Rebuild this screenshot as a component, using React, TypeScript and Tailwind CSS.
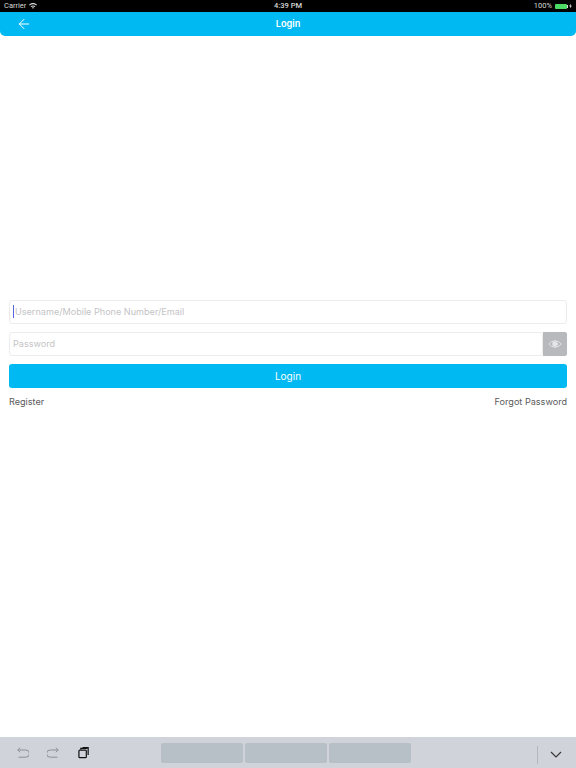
import { ArrowLeft } from 'lucide-react';

const font = "font-['Inter','Liberation_Sans',sans-serif]";

function StatusBar() {
  return (
    <div className="grid grid-cols-3 items-center h-3 bg-black px-1 font-['Roboto',sans-serif] text-[7.5px] leading-3 text-[#d8d8d8]">
      <div className="flex items-center gap-[3px]">
        <span>Carrier</span>
        <svg width="8" height="6" viewBox="0 0 8 6" fill="#d8d8d8">
          <path d="M0 1.8C2.3-.5 5.7-.5 8 1.8L7.2 2.6C5.3.9 2.7.9.8 2.6zM1.6 3.3c1.4-1.2 3.4-1.2 4.8 0l-.8.8c-1-.8-2.2-.8-3.2 0zM3 4.7c.6-.5 1.4-.5 2 0L4 5.800z" />
        </svg>
      </div>
      <div className="text-center font-medium">4:39 PM</div>
      <div className="flex items-center justify-end">
        <span>100%</span>
        <span className="w-[12px] h-[5px] ml-[3px] bg-[#4cd964] rounded-[1px]" />
        <span className="w-[1px] h-[3px] bg-[#d8d8d8]" />
        <svg width="3" height="6" viewBox="0 0 4 6" fill="#d8d8d8" className="ml-[1px]">
          <path d="M2.4 0 0 3.4h1.500L1.200 6 4 2.500H2.300z" />
        </svg>
      </div>
    </div>
  );
}

function Header() {
  return (
    <div className="relative flex items-center justify-center h-6 bg-[#00b9f2] rounded-b-[5px] text-white">
      <ArrowLeft className="absolute left-4 top-1 w-4 h-4" strokeWidth={1.5} />
      <span className="text-[9.2px] font-semibold">Login</span>
    </div>
  );
}

function LoginForm() {
  return (
    <div className="flex flex-col px-[9px] pt-[264px]">
      <div className="flex items-center h-6 pb-[1px] border border-[#ececec] rounded-[3px] pl-[3px] text-[9.1px] text-[#c4c4c6]">
        <span className="w-[1px] h-[13px] bg-[#5566dd] mr-[1px]" />
        Username/Mobile Phone Number/Email
      </div>
      <div className="flex mt-2 h-6">
        <div className="flex flex-1 items-center pb-[1px] border border-[#ececec] rounded-[3px] pl-[3px] text-[9.1px] text-[#c4c4c6]">
          Password
        </div>
        <button className="flex items-center justify-center w-6 bg-[#b7b9bc] rounded-r-[2px]">
          <svg width="14" height="10" viewBox="0 0 14 10" fill="none" stroke="#e4e5e6" strokeWidth="1">
            <path d="M.8 5C4 .8 10 .8 13.200 5 10 9.200 4 9.200.8 5z" />
            <circle cx="7" cy="5" r="2.400" fill="#e4e5e6" />
          </svg>
        </button>
      </div>
      <button className="flex items-center justify-center mt-2 h-6 bg-[#00b9f2] rounded-[3px] text-[10px] text-white">
        Login
      </button>
      <div className="flex justify-between mt-[6px] text-[9.1px] leading-4 text-[#5a5a5a]">
        <span>Register</span>
        <span>Forgot Password</span>
      </div>
    </div>
  );
}

function KeyboardBar() {
  return (
    <div className="flex items-center h-[31px] mt-auto bg-[#d0d3da]">
      <div className="flex items-center gap-[18px] pl-[17px] w-[161px]">
        <svg width="12" height="12" viewBox="0 0 12 12" fill="none" stroke="#8e9095" strokeWidth="1">
          <path d="M.8 3h8a2.600 2.600 0 0 1 0 7.200H1.500M3.200.8.800 3l2.400 2.200" />
        </svg>
        <svg width="12" height="12" viewBox="0 0 12 12" fill="none" stroke="#8e9095" strokeWidth="1">
          <path d="M11.200 3h-8a2.600 2.600 0 0 0 0 7.200h7.300M8.800.8 11.200 3 8.800 5.200" />
        </svg>
        <svg width="12" height="13" viewBox="0 0 13 13" fill="none" stroke="#111" strokeWidth="1.300" className="ml-[1px]">
          <rect x="1" y="4" width="8" height="8" rx="1" />
          <path d="M3 3.200V2h7v0M5 1.200h6v8" />
        </svg>
      </div>
      <div className="flex gap-[2px]">
        <div className="w-[82px] h-5 bg-[#b8c0c7] rounded-[2px]" />
        <div className="w-[82px] h-5 bg-[#b8c0c7] rounded-[2px]" />
        <div className="w-[82px] h-5 bg-[#b8c0c7] rounded-[2px]" />
      </div>
      <div className="flex items-center ml-auto mt-1">
        <span className="w-[1px] h-[18px] bg-[#b5b7bc]" />
        <svg width="12" height="7" viewBox="0 0 12 7" fill="none" stroke="#333" strokeWidth="1.100" className="ml-[12px] mr-[14px]">
          <path d="M1 1l5 5 5-5" />
        </svg>
      </div>
    </div>
  );
}

export default function App() {
  return (
    <div className={`flex flex-col h-[768px] bg-white ${font}`}>
      <StatusBar />
      <Header />
      <LoginForm />
      <KeyboardBar />
    </div>
  );
}
